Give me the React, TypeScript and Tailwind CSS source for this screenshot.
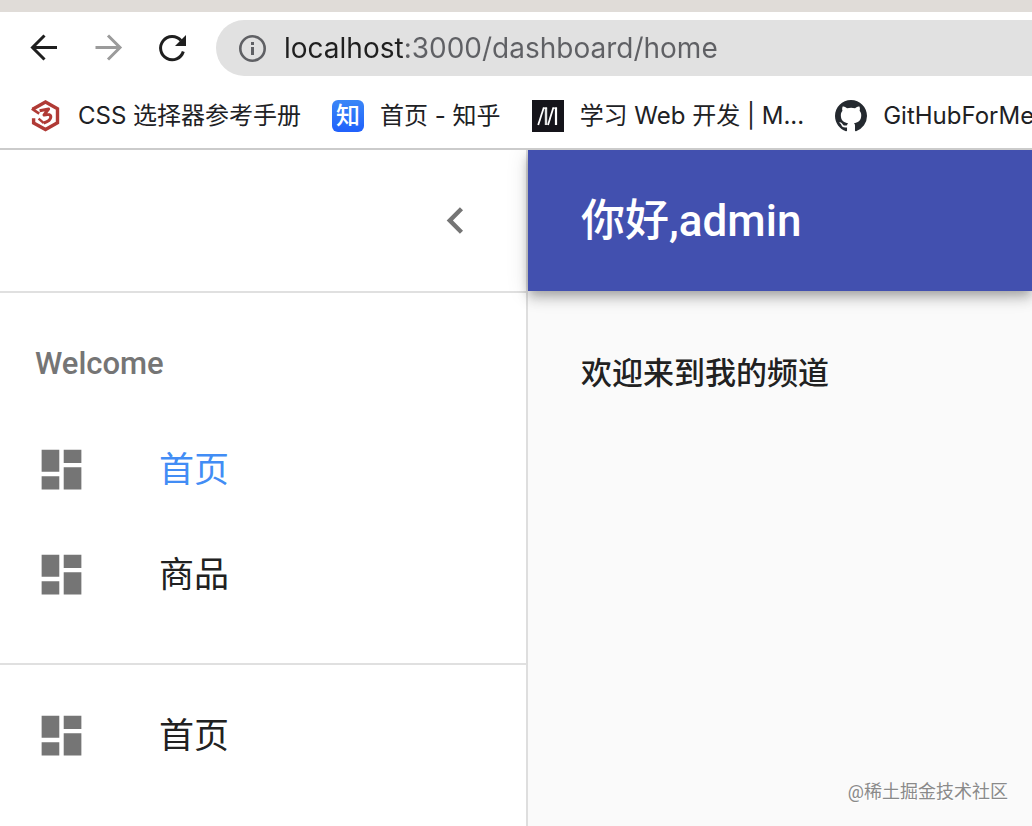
import type { ReactNode } from 'react';

interface Bookmark {
  label: string;
  icon: ReactNode;
}

const Css3Icon = () => (
  <svg className="size-8 shrink-0" viewBox="0 0 32 32" fill="none" stroke="#b03a35" aria-hidden="true">
    <path d="M2.6 9.2 15.5 2l12 6.8v14L15.5 29.6 3.6 22.9v-4.6" strokeWidth="3.4" />
    <path d="m9.6 10.8 9-1.8-4.6 6c4.6-1.4 7-.2 6.8 2.2-.2 2.6-3 4.6-7 5.8" strokeWidth="3" strokeLinejoin="round" />
    <path d="m1.8 8.6 7.4 5" strokeWidth="2.6" />
    <path d="m8.6 18.6 5.2 4.6" strokeWidth="2.4" />
  </svg>
);

const ZhihuIcon = () => (
  <span
    className="flex size-8 shrink-0 items-center justify-center rounded-md bg-linear-to-b from-[#3b86f7] to-[#2160fb] text-2xl leading-8 font-medium text-white"
    aria-hidden="true"
  >
    知
  </span>
);

const MdnIcon = () => (
  <svg className="size-8 shrink-0 bg-[#15141a]" viewBox="0 0 32 32" fill="none" stroke="#fff" aria-hidden="true">
    <path d="M6.2 25 11.8 7.5" strokeWidth="1.8" />
    <path d="M14 7.5V25" strokeWidth="2.4" stroke="#e2e2e2" />
    <path d="M16 25 21.4 7.5" strokeWidth="1.8" />
    <path d="M24 7.5V25" strokeWidth="2.2" />
    <path d="M11.2 8.1H15M20.8 8.1H25" strokeWidth="1.2" />
  </svg>
);

const GithubIcon = () => (
  <svg className="size-8 shrink-0" viewBox="0 0 16 16" fill="#24292f" aria-hidden="true">
    <path d="M8 0C3.58 0 0 3.58 0 8c0 3.54 2.29 6.53 5.47 7.59.4.07.55-.17.55-.38 0-.19-.01-.82-.01-1.49-2.01.37-2.53-.49-2.69-.94-.09-.23-.48-.94-.82-1.13-.28-.15-.68-.52-.01-.53.63-.01 1.08.58 1.23.82.72 1.21 1.87.87 2.33.66.07-.52.28-.87.51-1.07-1.78-.2-3.64-.89-3.64-3.95 0-.87.31-1.59.82-2.15-.08-.2-.36-1.02.08-2.12 0 0 .67-.21 2.2.82.64-.18 1.32-.27 2-.27s1.36.09 2 .27c1.53-1.04 2.2-.82 2.2-.82.44 1.1.16 1.92.08 2.12.51.56.82 1.27.82 2.15 0 3.07-1.87 3.75-3.65 3.95.29.25.54.73.54 1.48 0 1.07-.01 1.93-.01 2.2 0 .21.15.46.55.38A8.01 8.01 0 0 0 16 8c0-4.42-3.58-8-8-8z" />
  </svg>
);

const DashboardIcon = () => (
  <svg className="size-[53px] shrink-0" viewBox="0 0 24 24" fill="#757575" aria-hidden="true">
    <path d="M3 13h8V3H3v10zm0 8h8v-6H3v6zm10 0h8V11h-8v10zm0-18v6h8V3h-8z" />
  </svg>
);

const bookmarks: Bookmark[] = [
  { label: 'CSS 选择器参考手册', icon: <Css3Icon /> },
  { label: '首页 - 知乎', icon: <ZhihuIcon /> },
  { label: '学习 Web 开发 | M...', icon: <MdnIcon /> },
  { label: 'GitHubForMe', icon: <GithubIcon /> },
];

const BrowserBar = () => (
  <header className="relative z-20 border-b-2 border-[#cbcbcb] bg-white font-[Inter,'Noto_Sans_CJK_SC',sans-serif]">
    <div className="h-3 bg-[#e0dcd8]" />
    <div className="flex items-center pt-2 pl-7">
      <button type="button" aria-label="Back" className="mr-8">
        <svg className="size-8" viewBox="0 0 32 32" fill="none" stroke="#1f1f1f" strokeWidth="3">
          <path d="M29 15.5H5M16.5 3.5l-12 12 12 12" />
        </svg>
      </button>
      <button type="button" aria-label="Forward" className="mr-8">
        <svg className="size-8" viewBox="0 0 32 32" fill="none" stroke="#9b9b9b" strokeWidth="3">
          <path d="M3.5 15.5h24M16 3.5l12 12-12 12" />
        </svg>
      </button>
      <button type="button" aria-label="Reload" className="mr-7">
        <svg className="size-8" viewBox="0 0 32 32" fill="none" stroke="#1f1f1f" strokeWidth="3">
          <path d="M27.3 19.5A11.6 11.6 0 1 1 25 8.6" />
          <path d="M30 3v11H19z" fill="#1f1f1f" stroke="none" />
        </svg>
      </button>
      <div className="flex h-14 flex-1 items-center gap-4 rounded-l-full bg-[#e1e1e1] pl-5">
        <svg className="size-8 shrink-0" viewBox="0 0 32 32" fill="none" stroke="#5f6064" strokeWidth="2.6" aria-hidden="true">
          <circle cx="16.5" cy="16.5" r="12.2" />
          <path d="M16.5 15v8M16.5 10v3" strokeWidth="3" />
        </svg>
        <input
          type="text"
          aria-label="Address"
          defaultValue="localhost:3000/dashboard/home"
          className="min-w-0 flex-1 bg-linear-[90deg,#1f1f1f_119px,#5f6064_119px] bg-clip-text text-[28px] leading-8 text-transparent outline-none"
        />
      </div>
    </div>
    <nav className="flex h-[72px] items-center gap-[31px] overflow-hidden pt-2 pl-[30px]">
      {bookmarks.map(({ label, icon }) => (
        <a key={label} href="#" className="flex shrink-0 items-center gap-4 text-2xl leading-8 whitespace-nowrap text-[#202124]">
          {icon}
          {label}
        </a>
      ))}
    </nav>
  </header>
);

const MenuItem = ({ label, active = false }: { label: string; active?: boolean }) => (
  <li>
    <a
      href="#"
      className={`flex h-[105px] items-center gap-[71px] px-[35px] text-[35px] ${active ? 'text-[#428df5]' : 'text-[#212121]'}`}
    >
      <DashboardIcon />
      <span className="pt-1">{label}</span>
    </a>
  </li>
);

const Sidebar = () => (
  <aside className="w-[528px] shrink-0 border-r-2 border-[#dedede] bg-white">
    <div className="flex h-[143px] items-center justify-end border-b-2 border-[#e0e0e0] pr-11">
      <button type="button" aria-label="Collapse menu">
        <svg className="size-[53px]" viewBox="0 0 24 24" fill="#757575">
          <path d="M15.41 7.41 14 6l-6 6 6 6 1.41-1.41L10.83 12z" />
        </svg>
      </button>
    </div>
    <ul className="border-b-2 border-[#e0e0e0] pt-[19px] pb-9">
      <li className="flex h-[105px] items-center px-[35px] text-[31px] font-medium text-[#757575]">Welcome</li>
      <MenuItem label="首页" active />
      <MenuItem label="商品" />
    </ul>
    <ul className="pt-[18px]">
      <MenuItem label="首页" />
    </ul>
  </aside>
);

export default function App() {
  return (
    <div className="flex min-h-screen flex-col overflow-hidden bg-[#fafafa]">
      <BrowserBar />
      <div className="flex flex-1 font-[Roboto,'Noto_Sans_CJK_SC',sans-serif]">
        <Sidebar />
        <div className="flex min-w-0 flex-1 flex-col">
          <div className="relative z-10 flex h-[141px] items-center bg-[#4250af] px-[53px] shadow-[0px_4px_9px_-2px_rgba(0,0,0,0.2),0px_9px_11px_0px_rgba(0,0,0,0.14),0px_2px_22px_0px_rgba(0,0,0,0.12)]">
            <h1 className="text-[44px] font-medium text-white">你好,admin</h1>
          </div>
          <main className="flex flex-1 flex-col justify-between">
            <p className="px-[53px] pt-[61px] text-[31px] leading-[44px] font-medium text-[#212121]">欢迎来到我的频道</p>
            <p className="self-end pr-6 pb-5 text-lg text-[#8a8a8a] [text-shadow:1px_1px_0_#fff]">@稀土掘金技术社区</p>
          </main>
        </div>
      </div>
    </div>
  );
}
